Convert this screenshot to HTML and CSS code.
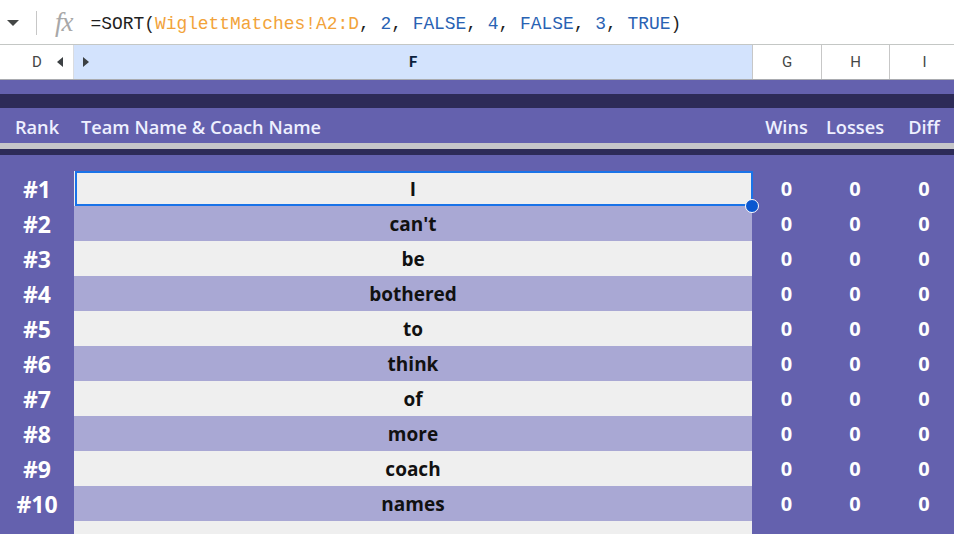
FILE: index.html
```html
<!DOCTYPE html>
<html>
<head>
<meta charset="utf-8">
<link rel="stylesheet" href="styles.css">
</head>
<body>
<div class="formula-bar">
  <span class="dd"></span>
  <span class="sep"></span>
  <span class="fx">fx</span>
  <span class="formula">=SORT(<span class="ref">WiglettMatches!A2:D</span>, <span class="lit">2</span>, <span class="lit">FALSE</span>, <span class="lit">4</span>, <span class="lit">FALSE</span>, <span class="lit">3</span>, <span class="lit">TRUE</span>)</span>
</div>
<div class="col-headers">
  <div class="ch ch-d"><span class="letter">D</span><span class="arr-l"></span></div>
  <div class="ch ch-f"><span class="arr-r"></span><span class="letter-f">F</span></div>
  <div class="ch ch-g">G</div>
  <div class="ch ch-h">H</div>
  <div class="ch ch-i">I</div>
</div>
<div class="sheet">
  <div class="band purple b14"></div>
  <div class="band dark b14"></div>
  <div class="row head">
    <div class="c rank">Rank</div>
    <div class="c name">Team Name &amp; Coach Name</div>
    <div class="c num">Wins</div>
    <div class="c num">Losses</div>
    <div class="c num">Diff</div>
  </div>
  <div class="band grey b6"></div>
  <div class="band dark b6"></div>
  <div class="band purple b16"></div>

  <div class="row data"><div class="c rank">#1</div><div class="c team light selected">I<span class="handle"></span></div><div class="c num">0</div><div class="c num">0</div><div class="c num">0</div></div>
  <div class="row data"><div class="c rank">#2</div><div class="c team lav">can't</div><div class="c num">0</div><div class="c num">0</div><div class="c num">0</div></div>
  <div class="row data"><div class="c rank">#3</div><div class="c team light">be</div><div class="c num">0</div><div class="c num">0</div><div class="c num">0</div></div>
  <div class="row data"><div class="c rank">#4</div><div class="c team lav">bothered</div><div class="c num">0</div><div class="c num">0</div><div class="c num">0</div></div>
  <div class="row data"><div class="c rank">#5</div><div class="c team light">to</div><div class="c num">0</div><div class="c num">0</div><div class="c num">0</div></div>
  <div class="row data"><div class="c rank">#6</div><div class="c team lav">think</div><div class="c num">0</div><div class="c num">0</div><div class="c num">0</div></div>
  <div class="row data"><div class="c rank">#7</div><div class="c team light">of</div><div class="c num">0</div><div class="c num">0</div><div class="c num">0</div></div>
  <div class="row data"><div class="c rank">#8</div><div class="c team lav">more</div><div class="c num">0</div><div class="c num">0</div><div class="c num">0</div></div>
  <div class="row data"><div class="c rank">#9</div><div class="c team light">coach</div><div class="c num">0</div><div class="c num">0</div><div class="c num">0</div></div>
  <div class="row data"><div class="c rank">#10</div><div class="c team lav">names</div><div class="c num">0</div><div class="c num">0</div><div class="c num">0</div></div>
  <div class="row data"><div class="c rank"></div><div class="c team light"></div><div class="c num"></div><div class="c num"></div><div class="c num"></div></div>
</div>
</body>
</html>
```
FILE: styles.css
```css
* { box-sizing: border-box; }
html, body { margin: 0; padding: 0; }
body {
  width: 954px;
  height: 534px;
  overflow: hidden;
  background: #ffffff;
  font-family: "Open Sans", "Noto Sans", sans-serif;
}

.formula-bar {
  height: 45px;
  display: flex;
  align-items: center;
  border-bottom: 1px solid #c4c7c5;
  background: #fff;
}
.dd {
  width: 0; height: 0;
  margin-left: 7px;
  margin-top: 2px;
  border-left: 6px solid transparent;
  border-right: 6px solid transparent;
  border-top: 6px solid #444746;
}
.sep {
  width: 1px;
  height: 24px;
  background: #c7c7c7;
  margin-left: 17px;
  margin-top: 2px;
}
.fx {
  margin-left: 18px;
  font-family: "Liberation Serif", serif;
  font-style: italic;
  font-size: 27px;
  color: #a8a8a8;
  letter-spacing: -1px;
  margin-top: 1px;
}
.formula {
  margin-left: 18px;
  margin-top: 3px;
  font-family: "Liberation Mono", "DejaVu Sans Mono", monospace;
  font-size: 17.9px;
  color: #1f1f1f;
  white-space: pre;
}
.ref { color: #f2a33a; }
.lit { color: #2962b3; }

.col-headers {
  height: 35px;
  display: grid;
  grid-template-columns: 74px 678px 69px 68px 70px;
  border-bottom: 1px solid #a9abb0;
  font-family: "Roboto", "Liberation Sans", sans-serif;
  font-size: 15px;
  color: #444746;
}
.ch {
  display: flex;
  align-items: center;
  justify-content: center;
  background: #fff;
}
.ch-d {
  justify-content: flex-start;
  border-right: 1px solid #dadce0;
}
.ch-d .letter { margin-left: 32px; }
.arr-l {
  width: 0; height: 0;
  margin-left: 15px;
  border-top: 5px solid transparent;
  border-bottom: 5px solid transparent;
  border-right: 6px solid #3c4043;
}
.ch-f {
  background: #d3e3fd;
  justify-content: flex-start;
  position: relative;
}
.arr-r {
  width: 0; height: 0;
  margin-left: 9px;
  border-top: 5px solid transparent;
  border-bottom: 5px solid transparent;
  border-left: 6px solid #3c4043;
}
.letter-f {
  position: absolute;
  left: 0; right: 0;
  text-align: center;
  font-weight: 700;
  color: #0b1f3d;
}
.ch-g, .ch-h, .ch-i { border-left: 1px solid #c7c7c7; }

.sheet {
  width: 959px;
  background: #6461ae;
}
.band { width: 100%; }
.purple { background: #6461ae; }
.dark { background: #2d2b58; }
.grey { background: #c6c6c9; }
.b14 { height: 14px; }
.b6 { height: 6px; }
.b16 { height: 16px; }

.row {
  display: grid;
  grid-template-columns: 74px 678px 69px 68px 70px;
}
.c {
  display: flex;
  align-items: center;
  justify-content: center;
  white-space: nowrap;
}
.head {
  height: 35px;
  color: #eef0ff;
  font-size: 18.2px;
  font-weight: 600;
}
.head .c { padding-top: 3px; }
.head .name { justify-content: flex-start; padding-left: 7px; }

.data { height: 35px; }
.data .rank {
  color: #ffffff;
  font-weight: 700;
  font-size: 23px;
}
.data .num {
  color: #ffffff;
  font-weight: 700;
  font-size: 20px;
}
.team {
  color: #111111;
  font-weight: 700;
  font-size: 19px;
  position: relative;
}
.light { background: #efefef; }
.lav { background: #a9a8d4; }

.selected::after {
  content: "";
  position: absolute;
  left: 1px; top: 0; right: -1px; bottom: 0;
  border: 2.5px solid #1a73e8;
  pointer-events: none;
}
.handle {
  position: absolute;
  right: -7px;
  bottom: -7px;
  width: 14px;
  height: 14px;
  border-radius: 50%;
  background: #0b57d0;
  border: 1.5px solid #ffffff;
  z-index: 2;
}
```
